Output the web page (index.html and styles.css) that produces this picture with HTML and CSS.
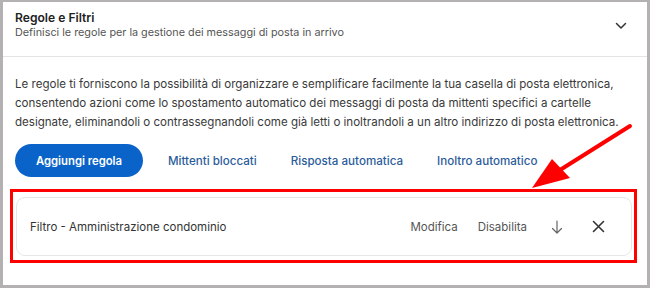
FILE: index.html
```html
<!DOCTYPE html>
<html lang="it">
<head>
<meta charset="utf-8">
<link rel="stylesheet" href="styles.css">
</head>
<body>
<div class="frame">
  <header class="head">
    <div class="head-text">
      <h1 class="title">Regole e Filtri</h1>
      <p class="subtitle">Definisci le regole per la gestione dei messaggi di posta in arrivo</p>
    </div>
    <svg class="chevron" width="12" height="8" viewBox="0 0 12 8"><path d="M1.5 1.5 L6 6 L10.5 1.5" fill="none" stroke="#333" stroke-width="1.5" stroke-linecap="round" stroke-linejoin="round"/></svg>
  </header>
  <section class="body">
    <p class="desc">Le regole ti forniscono la possibilità di organizzare e semplificare facilmente la tua casella di posta elettronica, consentendo azioni come lo spostamento automatico dei messaggi di posta da mittenti specifici a cartelle designate, eliminandoli o contrassegnandoli come già letti o inoltrandoli a un altro indirizzo di posta elettronica.</p>
    <div class="actions">
      <button class="btn-primary">Aggiungi regola</button>
      <div class="links">
        <a class="link">Mittenti bloccati</a>
        <a class="link">Risposta automatica</a>
        <a class="link">Inoltro automatico</a>
      </div>
    </div>
    <div class="highlight">
      <div class="rule">
        <span class="rule-name">Filtro - Amministrazione condominio</span>
        <div class="rule-actions">
          <span class="rule-link">Modifica</span>
          <span class="rule-link">Disabilita</span>
          <svg class="icon-down" width="12" height="14" viewBox="0 0 12 14"><path d="M6 1 V13 M1.5 8.5 L6 13 L10.5 8.5" fill="none" stroke="#666" stroke-width="1.2" stroke-linecap="round" stroke-linejoin="round"/></svg>
          <svg class="icon-x" width="13" height="13" viewBox="0 0 13 13"><path d="M1.5 1.5 L11.5 11.5 M11.5 1.5 L1.5 11.5" fill="none" stroke="#333" stroke-width="1.6" stroke-linecap="round"/></svg>
        </div>
      </div>
    </div>
  </section>
  <svg class="arrow" width="650" height="288" viewBox="0 0 650 288">
    <line x1="630" y1="126" x2="560" y2="170" stroke="#f00" stroke-width="4" stroke-linecap="round"/>
    <polygon points="532,188 552,159 570,178" fill="#f00"/>
  </svg>
</div>
</body>
</html>
```

FILE: styles.css
```css
* { box-sizing: border-box; }
html, body { margin: 0; padding: 0; }
body {
  width: 650px;
  height: 288px;
  font-family: Inter, "Noto Sans", sans-serif;
  color: #333;
  background: #fff;
}
.frame {
  position: relative;
  width: 650px;
  height: 288px;
  border: 3px solid #b3b1b1;
  border-top-width: 2px;
  background: #fff;
  overflow: hidden;
}
.head {
  display: flex;
  justify-content: space-between;
  align-items: flex-start;
  padding: 9px 20px 0 12px;
  height: 55px;
  border-bottom: 1px solid #e4e4e4;
}
.head-text { display: flex; flex-direction: column; }
.title {
  margin: 0;
  font-size: 12.1px;
  font-weight: 600;
  line-height: 14px;
  color: #222;
}
.subtitle {
  margin: 1px 0 0;
  font-size: 10.8px;
  line-height: 14px;
  color: #555;
}
.chevron { margin-top: 11px; }
.body { padding: 18px 12px 0 12px; }
.desc {
  margin: 0;
  font-size: 11.55px;
  line-height: 19px;
  color: #3a3a3a;
}
.actions {
  display: flex;
  align-items: center;
  margin-top: 12px;
}
.btn-primary {
  font-family: inherit;
  font-size: 11.3px;
  font-weight: 600;
  color: #fff;
  background: #0a63c9;
  border: none;
  border-radius: 17px;
  height: 33px;
  width: 128px;
  padding: 0;
}
.links {
  display: flex;
  align-items: center;
  gap: 34px;
  margin-left: 25px;
}
.link {
  font-size: 11.6px;
  color: #2b5c9a;
  font-weight: 500;
}
.highlight {
  margin: 12px -2px 0 -5px;
  border: 3px solid #ff0000;
  padding: 5px 2px 4px 3px;
}
.rule {
  display: flex;
  align-items: center;
  justify-content: space-between;
  height: 59px;
  border: 1px solid #e6e6e6;
  border-radius: 9px;
  padding: 0 26px 0 13px;
}
.rule-name { font-size: 11.5px; color: #333; }
.rule-actions { display: flex; align-items: center; gap: 20px; }
.rule-link { font-size: 11.5px; color: #555; }
.icon-down { margin-left: 4px; }
.icon-x { margin-left: 9px; }
.arrow {
  position: absolute;
  left: -3px;
  top: -2px;
  pointer-events: none;
}
```
